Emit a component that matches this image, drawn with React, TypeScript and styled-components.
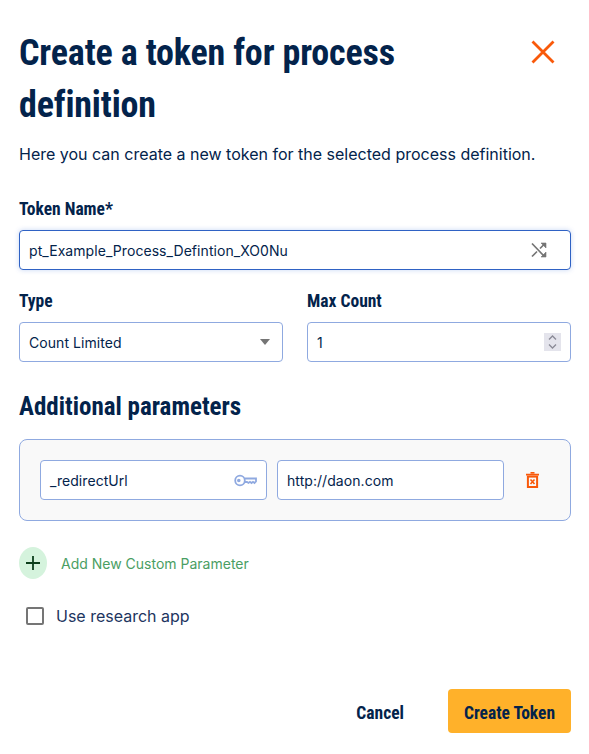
import React from 'react';
import styled, { createGlobalStyle } from 'styled-components';

const navy = '#03234b';
const cond = '"Roboto Condensed", "Liberation Sans Narrow", "Liberation Sans", sans-serif';

const Global = createGlobalStyle`
  html, body { margin: 0; padding: 0; background: #fff; }
  * { box-sizing: border-box; }
`;
const Dialog = styled.div`
  width: 589px; height: 754px; padding: 27px 18px 21px 19px;
  display: flex; flex-direction: column; color: ${navy};
  font-family: Inter, "Liberation Sans", sans-serif; overflow: hidden;
`;
const Header = styled.header`display: flex; justify-content: space-between; align-items: flex-start;`;
const Title = styled.h1`
  margin: 0; width: 440px; font: 700 36px/52px ${cond}; letter-spacing: -.16px; color: ${navy};
`;
const Close = styled.button`
  border: 0; background: none; padding: 0; margin: 13px 16px 0 0; width: 24px; height: 24px; display: flex;
`;
const Intro = styled.p`margin: 12px 0 0; font-size: 16px; line-height: 22px;`;
const Label = styled.label`display: block; font: 700 17.5px/22px ${cond}; color: ${navy}; margin-bottom: 10px;`;
const TokenField = styled.div`margin-top: 33px;`;
const InputBox = styled.div<{ $focus?: boolean }>`
  height: 40px; display: flex; align-items: center; justify-content: space-between;
  padding: 0 9px; background: #fff; border-radius: 4px; font-size: 14px; letter-spacing: .06px; color: ${navy};
  border: 1px solid ${p => (p.$focus ? '#2f62c4' : '#8fa9e0')};
  box-shadow: ${p => (p.$focus ? '0 0 5px rgba(70,120,220,.3)' : 'none')};
`;
const Row = styled.div`display: grid; grid-template-columns: 264px 264px; gap: 24px; margin-top: 20px;`;
const Caret = styled.span`width: 0; height: 0; margin-right: 3px; border: 5.5px solid transparent; border-top: 6px solid #757575; border-bottom: 0;`;
const Spinner = styled.span`width: 17px; height: 18px; background: #e4e4ec; display: flex;`;
const Section = styled.h2`margin: 28px 0 0; font: 700 25px/34px ${cond}; color: ${navy};`;
const Panel = styled.div`
  margin-top: 15px; height: 82px; padding: 20px 0 0 20px; background: #f9f9f9;
  border: 1px solid #8fa9e0; border-radius: 8px; display: grid;
  grid-template-columns: 227px 227px 34px; gap: 10px; align-items: start;
`;
const Trash = styled.span`display: flex; justify-content: center; padding-top: 12px; padding-left: 2px;`;
const Add = styled.div`display: flex; align-items: center; gap: 14px; margin-top: 26px; height: 32px;`;
const Round = styled.span`width: 28px; height: 32px; border-radius: 50%; background: #d5f3dd; display: flex; align-items: center; justify-content: center;`;
const AddText = styled.span`font-size: 14px; color: #4a9e63;`;
const Check = styled.label`display: flex; align-items: center; gap: 12px; margin: 25px 0 0 7px; height: 24px; font-size: 16px; color: #1d3560;`;
const Box = styled.span`width: 18px; height: 18px; border: 2px solid #757575; border-radius: 2px; background: #fff;`;
const Footer = styled.footer`margin-top: auto; display: flex; justify-content: flex-end; align-items: center; gap: 44px;`;
const Cancel = styled.button`border: 0; background: none; padding: 3px 0 0; color: ${navy}; font: 700 17.5px/22px ${cond};`;
const Primary = styled.button`border: 0; width: 123px; height: 44px; padding: 3px 0 0; border-radius: 4px; background: #ffb12a; color: ${navy}; font: 700 17.5px/22px ${cond};`;

export default function App() {
  return (
    <Dialog>
      <Global />
      <Header>
        <Title>Create a token for process definition</Title>
        <Close aria-label="Close">
          <svg width="24" height="24" viewBox="0 0 24 24"><path d="M1.5 1.5 L22.5 22.5 M22.5 1.5 L1.5 22.5" stroke="#f9590a" strokeWidth="2.8" fill="none" /></svg>
        </Close>
      </Header>
      <Intro>Here you can create a new token for the selected process definition.</Intro>
      <TokenField>
        <Label>Token Name*</Label>
        <InputBox $focus>
          <span>pt_Example_Process_Defintion_XO0Nu</span>
          <svg width="16" height="16" viewBox="0 0 16 16" style={{ marginRight: 14 }} fill="none" stroke="#757575" strokeWidth="1.7">
            <path d="M1 1.5 L13 14 M1 14.5 L6 9.5 M9 6.5 L13 2.5" />
            <path d="M10 1 H15 V6 Z M15 10 V15 H10 Z" fill="#757575" strokeWidth="0.6" />
          </svg>
        </InputBox>
      </TokenField>
      <Row>
        <div>
          <Label>Type</Label>
          <InputBox><span>Count Limited</span><Caret /></InputBox>
        </div>
        <div>
          <Label>Max Count</Label>
          <InputBox>
            <span>1</span>
            <Spinner>
              <svg width="17" height="18" viewBox="0 0 17 18" fill="none" stroke="#8a8a96" strokeWidth="1.3"><path d="M5 6.5 L8.5 3 L12 6.5 M5 11.5 L8.5 15 L12 11.5" /></svg>
            </Spinner>
          </InputBox>
        </div>
      </Row>
      <Section>Additional parameters</Section>
      <Panel>
        <InputBox>
          <span>_redirectUrl</span>
          <svg width="23" height="13" viewBox="0 0 23 13" fill="none" stroke="#8fa9e0" strokeWidth="1.8">
            <circle cx="6" cy="6.5" r="4.8" /><circle cx="4.8" cy="6.5" r=".9" />
            <path d="M10.8 4.5 H22 V7.5 L20.5 9 L19 7.8 L17.5 9 L16 7.8 L14.5 9 L13 8 H10.8" />
          </svg>
        </InputBox>
        <InputBox><span>http://daon.com</span></InputBox>
        <Trash>
          <svg width="13" height="16" viewBox="0 0 13 16" fill="none" stroke="#f9590a">
            <path d="M0 2.6 H13 M4.5 .8 H8.5" strokeWidth="1.6" />
            <rect x="1.9" y="4.6" width="9.2" height="10.4" strokeWidth="2" />
            <path d="M4.5 7.5 L8.5 12 M8.5 7.5 L4.5 12" strokeWidth="1.6" />
          </svg>
        </Trash>
      </Panel>
      <Add>
        <Round>
          <svg width="14" height="14" viewBox="0 0 14 14"><path d="M7 0 V14 M0 7 H14" stroke="#0d3f1c" strokeWidth="1.8" /></svg>
        </Round>
        <AddText>Add New Custom Parameter</AddText>
      </Add>
      <Check><Box />Use research app</Check>
      <Footer>
        <Cancel>Cancel</Cancel>
        <Primary>Create Token</Primary>
      </Footer>
    </Dialog>
  );
}
